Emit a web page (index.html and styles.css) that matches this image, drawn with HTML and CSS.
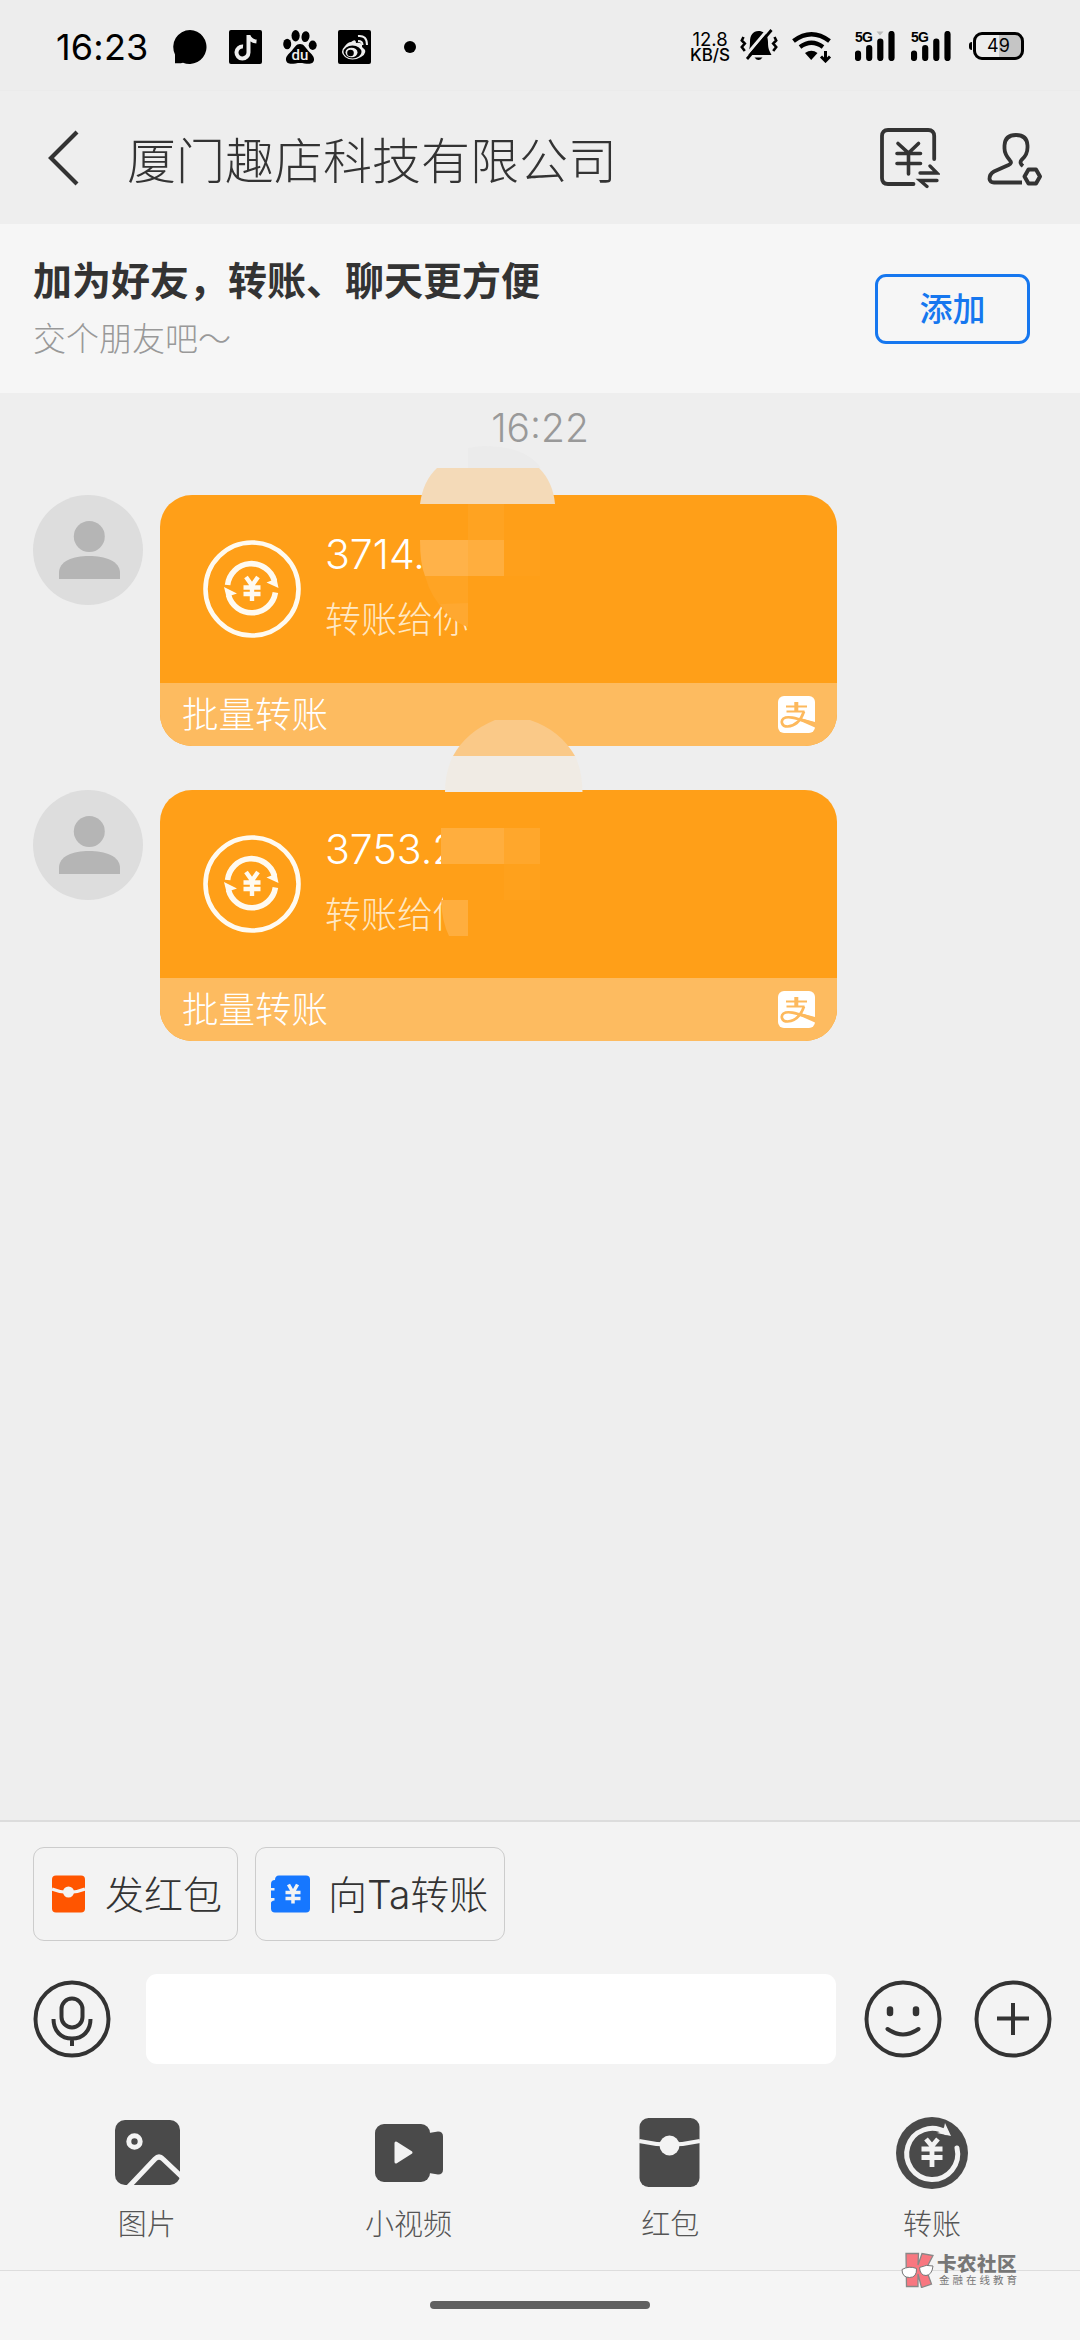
FILE: index.html
```html
<!DOCTYPE html>
<html lang="zh-CN">
<head>
<meta charset="utf-8">
<title>厦门趣店科技有限公司</title>
<link rel="stylesheet" href="styles.css">
</head>
<body>
<svg class="defs" width="0" height="0">
  <symbol id="coin" viewBox="0 0 100 100">
    <circle cx="50" cy="50" r="46.5" fill="none" stroke="#fffaf0" stroke-width="4.6"/>
    <path d="M25.600 46A24 24 0 0 1 72.500 42" fill="none" stroke="#fffaf0" stroke-width="5.6"/>
    <path d="M64.500 43.500l10-4 2 9.500z M35 54.500l-10.500 3.500-2.500-10z" fill="#fffaf0"/>
    <path d="M73.400 53.500A24 24 0 0 1 26.500 56" fill="none" stroke="#fffaf0" stroke-width="5.600"/>
    <path d="M44 38l6 8.500 6-8.500M50 46v16M41.500 48.500h17M41.500 55h17" fill="none" stroke="#fffaf0" stroke-width="4.400"/>
  </symbol>
  <symbol id="alipay" viewBox="0 0 37 37">
    <rect width="37" height="37" rx="6" fill="#fff"/>
    <path d="M8 10.500h21M8.500 15.500h18" fill="none" stroke="#fdb95d" stroke-width="2"/>
    <path d="M16.300 6h4v9h-4z" fill="#fdb95d"/>
    <path d="M26 15.500C23 24 17 30 9.500 30.500 3.500 30.500 2.500 25 5.500 22.500 10 19.500 17 22 37 28" fill="none" stroke="#fdb95d" stroke-width="2.700"/>
    <path d="M22 22L37 26v5.500L20 24z" fill="#fdb95d"/>
  </symbol>
  <symbol id="person" viewBox="0 0 110 110">
    <circle cx="55" cy="55" r="55" fill="#ddd"/>
    <circle cx="56.300" cy="41.500" r="15.500" fill="#b5b5b5"/>
    <path d="M26 84V78C26 66 40 61 56 61S87 66 87 78V84z" fill="#b5b5b5"/>
  </symbol>
  <symbol id="bars" viewBox="0 0 40 30">
    <path d="M3 22.500v4.500M14.200 17v10M25.300 10.500v16.500M36.500 3v24" stroke="#000" stroke-width="6.200" stroke-linecap="round"/>
  </symbol>
</svg>

<div class="phone">
  <div class="status">
    <span class="clock">16:23</span>
    <svg class="s-chat" width="36" height="36" viewBox="0 0 36 36"><path d="M18 1A17 17 0 1 1 11 33.700Q9 34.500 3 34.300V25.500A17 17 0 0 1 18 1z"/></svg>
    <svg class="s-app" width="33" height="34" viewBox="0 0 33 34"><rect width="33" height="34" rx="2"/><path d="M19.500 5v17.500a6 6 0 1 1-5.500-6M19.500 6q2 5 8 5.500" fill="none" stroke="#eee" stroke-width="4"/></svg>
    <svg class="s-app" width="34" height="34" viewBox="0 0 34 34"><ellipse cx="4.200" cy="14" rx="4" ry="5.300"/><ellipse cx="12.600" cy="5.700" rx="4.100" ry="5.700"/><ellipse cx="22.600" cy="6.500" rx="4" ry="5.500" transform="rotate(10 22 6)"/><ellipse cx="29.700" cy="15.300" rx="4" ry="4.700"/><path d="M17 14C21 14 22.500 17.500 25 20.500S31.500 26 31 30C30 36 22.500 33 17 33S4 36 3 30C2.500 26 6.500 23.500 9 20.500S13 14 17 14z"/><text x="17" y="30" class="du">du</text></svg>
    <svg class="s-app" width="33" height="34" viewBox="0 0 33 34"><rect width="33" height="34" rx="2"/><path d="M13 12Q18 8 18 13q7-1 6 4 7 5-1 10-9 5-16 0-6-5 0-11 3-4 6-4z" fill="#eee"/><ellipse cx="14.500" cy="22" rx="9" ry="6.500"/><ellipse cx="13.500" cy="22.500" rx="6" ry="4.800" fill="#eee"/><circle cx="12.500" cy="23" r="3.300"/><path d="M20 6q9-1 9 9M20 11q4.500 0 4.500 4" fill="none" stroke="#eee" stroke-width="2"/></svg>
    <span class="dot"></span>
    <div class="speed"><span>12.8</span><b>KB/S</b></div>
    <svg class="s-bell" width="40" height="36" viewBox="0 0 40 36"><path d="M8 27Q11 22 11 14C11 7 14 3 19.500 3S29 7 29 14 30 22 32.500 27z"/><path d="M15.500 29.500h8q-4 5-8 0z"/><path d="M6 28.500L30.500-.5" stroke="#ededed" stroke-width="3"/><path d="M8 31L32.500 2" stroke="#000" stroke-width="2.800"/><path d="M4.500 9l-1.700 3.500 3 3-3 3.500 3 4M35.500 9l1.700 3.500-3 3 3 3.500-3 4" fill="none" stroke="#000" stroke-width="2.600"/></svg>
    <svg class="s-wifi" width="40" height="32" viewBox="0 0 40 32"><path d="M1.500 10Q19.500-3.500 37.500 10" fill="none" stroke="#000" stroke-width="4.500"/><path d="M8 16Q19.500 7.500 31 16" fill="none" stroke="#000" stroke-width="4.300"/><path d="M13 22q6.500-4.500 12.500 0l-6.300 7z"/><path d="M33.500 20v9M29 25.500l4.500 4.500 4.500-4.500" fill="none" stroke="#000" stroke-width="3"/></svg>
    <div class="cell"><span>5G</span><svg width="40" height="30"><use href="#bars"/><path d="M21.500.5h7l-3.500 4z" fill="#bbb"/></svg></div>
    <div class="cell second"><span>5G</span><svg width="40" height="30"><use href="#bars"/></svg></div>
    <div class="battery"><i></i><span>49</span></div>
  </div>

  <header class="header">
    <svg class="back" width="34" height="56" viewBox="0 0 34 56"><path d="M31 2L5 28 31 54" fill="none" stroke="#333" stroke-width="4.200"/></svg>
    <h1>厦门趣店科技有限公司</h1>
    <svg class="h-yen" width="60" height="62" viewBox="0 0 60 62" fill="none" stroke="#333" stroke-width="3.800" stroke-linecap="round"><path d="M54.200 31V8q0-6-6-6H8Q2 2 2 8v42q0 6 6 6h25.500"/><path d="M18 15.500l10.500 9.500 10-9.500M28.500 25v21M17 25.500h23.500M17 35.500h23.500" stroke-width="3.600"/><path d="M40 45h17l-7-7M57 52.500H40l7 6" stroke-width="3.300"/></svg>
    <svg class="h-user" width="56" height="54" viewBox="0 0 56 54" fill="none" stroke="#333" stroke-width="3.800"><path d="M36 34Q32 31 34.500 28C38 25 40.500 21 40.500 15.500V13.500Q40 3 29 3T17.500 13.500v3C17.500 22 20 25 23 28.500Q25.500 31 21.500 33L7 39.500Q2.500 42 2.500 47 3 50.500 7 50.500H35"/><path d="M41.500 37.500h7.500l4 7-4 7h-7.500l-4-7z" stroke-width="4" stroke-linejoin="round"/></svg>
  </header>

  <section class="friend">
    <div class="friend-text"><h2>加为好友，转账、聊天更方便</h2><p>交个朋友吧～</p></div>
    <button class="add">添加</button>
  </section>

  <main class="chat">
    <time>16:22</time>
    <article class="msg">
      <svg class="avatar" width="110" height="110"><use href="#person"/></svg>
      <div class="card">
        <div class="card-main"><svg width="100" height="100"><use href="#coin"/></svg><div class="card-text"><strong>3714.</strong><span>转账给你</span></div></div>
        <div class="card-foot"><span>批量转账</span><svg width="37" height="37"><use href="#alipay"/></svg></div>
      </div>
    </article>
    <article class="msg">
      <svg class="avatar" width="110" height="110"><use href="#person"/></svg>
      <div class="card">
        <div class="card-main"><svg width="100" height="100"><use href="#coin"/></svg><div class="card-text"><strong>3753.2</strong><span>转账给你</span></div></div>
        <div class="card-foot"><span>批量转账</span><svg width="37" height="37"><use href="#alipay"/></svg></div>
      </div>
    </article>
    <svg class="mosaic" width="180" height="510" viewBox="410 440 180 510">
      <path d="M468 448Q482 445 494 446.500 526 448 541 468H468z" fill="#ebebeb"/>
      <path d="M437 468H539Q553 482 555 504H420Q423 481 437 468z" fill="#f4dab8"/>
      <path d="M468 504h36v36h-36z" fill="#ffa321"/>
      <path d="M420 540h48v36h-43q-5-12-5-36z" fill="#ffb249"/>
      <path d="M468 540h36v36h-36z" fill="#ffae3e"/>
      <path d="M504 540h36v36h-36z" fill="#ffa01b"/>
      <path d="M425 576h43v36h-22q-15-14-21-36z" fill="#ffa424"/>
      <path d="M440 604l28-1v24q-12-4-22-14z" fill="#ffa830"/>
      <path d="M468 590h12v50h-12z" fill="#ff9f18"/>
      <path d="M495 720h35Q560 730 575 756H453Q466 732 495 720z" fill="#fac988"/>
      <path d="M453 756H575Q582 770 582.500 792H445Q445 772 453 756z" fill="#f0ebe4"/>
      <path d="M441 828h63v36h-63z" fill="#ffae3e"/>
      <path d="M504 828h36v36h-36z" fill="#ffa72c"/>
      <path d="M504 864h36v36h-36z" fill="#ffa11c"/>
      <path d="M443 885h40v54h-40z" fill="#ff9f18"/>
      <path d="M441 900h27v36h-19q-7-14-8-36z" fill="#ffae3e"/>
    </svg>
  </main>

  <footer class="composer">
    <div class="chips">
      <div class="chip"><svg width="33" height="38" viewBox="0 0 33 38"><rect y=".5" width="33" height="37" rx="4" fill="#ff5500"/><path d="M0 14Q16.500 21 33 14" fill="none" stroke="#f3f3f3" stroke-width="3"/><circle cx="16.500" cy="17" r="5.500" fill="#f3f3f3"/></svg><span>发红包</span></div>
      <div class="chip two"><svg width="39" height="38" viewBox="0 0 39 38"><path d="M8 .5H35Q39 .5 39 4.500V33.500Q39 37.500 35 37.500H4Q0 37.500 0 33.500V28Q0 26 3.500 25.500V23H0V15.500H3.500V13H0V9Q0 5 4 5 4 .5 8 .5z" fill="#1677ff"/><path d="M17.500 9.500l4.500 8 4.500-8M22 17v11.500M14.500 17.500h15M14.500 23.500h15" fill="none" stroke="#f3f3f3" stroke-width="3.500"/></svg><span>向Ta转账</span></div>
    </div>
    <div class="inputrow">
      <svg width="78" height="78" viewBox="0 0 78 78" fill="none" stroke="#333" stroke-width="4"><circle cx="39" cy="39" r="36.500"/><rect x="28.500" y="18.500" width="21" height="29" rx="10.500"/><path d="M20.500 39C20.500 51 28 58.500 39 58.500S57.500 51 57.500 39M39 58v8"/></svg>
      <div class="field"></div>
      <svg class="smile" width="78" height="78" viewBox="0 0 78 78" fill="none" stroke="#333" stroke-width="4"><circle cx="39" cy="39" r="36.500"/><path d="M26 29.500v3.500M52 29.500v3.500" stroke-width="6.500" stroke-linecap="round"/><path d="M23.500 49Q39 60 54.500 49" stroke-linecap="round"/></svg>
      <svg class="plus" width="78" height="78" viewBox="0 0 78 78" fill="none" stroke="#333" stroke-width="4"><circle cx="39" cy="39" r="36.500"/><path d="M23 38.500h32M39 23v32"/></svg>
    </div>
    <div class="tools">
      <div class="tool"><svg width="76" height="76" viewBox="0 0 76 76"><rect x="6" y="5" width="65" height="65" rx="10" fill="#4a4a4a"/><circle cx="25.500" cy="26.500" r="5.700" fill="none" stroke="#f3f3f3" stroke-width="5"/><path d="M19.500 72L46 44Q50 40 54 44L73 62" fill="none" stroke="#f3f3f3" stroke-width="5"/></svg><span>图片</span></div>
      <div class="tool"><svg width="76" height="76" viewBox="0 0 76 76"><rect x="4" y="9" width="55" height="58" rx="9" fill="#4a4a4a"/><path d="M58 18l9-1.500q5 0 5 5v33q0 5-5 5l-9-1.500z" fill="#4a4a4a"/><path d="M25 28v19l15-9.500z" fill="#f3f3f3" stroke="#f3f3f3" stroke-width="3" stroke-linejoin="round"/></svg><span>小视频</span></div>
      <div class="tool"><svg width="76" height="76" viewBox="0 0 76 76"><rect x="7.500" y="3" width="60" height="69" rx="9" fill="#4a4a4a"/><path d="M7 26Q37.500 33 68 26" fill="none" stroke="#f3f3f3" stroke-width="4.200"/><circle cx="37.500" cy="30.500" r="10" fill="#f3f3f3"/></svg><span>红包</span></div>
      <div class="tool"><svg width="76" height="76" viewBox="0 0 76 76"><circle cx="38" cy="38" r="36" fill="#4a4a4a"/><path d="M52 17.500A25.500 25.500 0 1 0 63 33" fill="none" stroke="#f3f3f3" stroke-width="5" stroke-linecap="round"/><path d="M51 8l6 13-14-3q7-1 8-10z" fill="#f3f3f3"/><path d="M32 24l6 7 6-7M38 31v21M27.500 34h21M27.500 42.500h21" fill="none" stroke="#f3f3f3" stroke-width="4.800"/></svg><span>转账</span></div>
    </div>
    <div class="watermark">
      <svg width="36" height="36" viewBox="0 0 36 36"><path d="M6 1.500h12.500L18 13 22 1.500l11 2L26 17l5.500 15-10 3.500L18 22v12.500H6.500z" fill="#f87780" stroke="#888" stroke-width="1.300"/><path d="M2 17.500q7-4 14.500-1 .5 9-7 9T2 17.500zM19.500 15.500q7-3.500 13.500-1.500-1 9-7 9.500-6 0-6.500-8z" fill="#fff" stroke="#777" stroke-width="1"/></svg>
      <div><b>卡农社区</b><small>金融在线教育</small></div>
    </div>
  </footer>
  <div class="nav"><i></i></div>
</div>
</body>
</html>
```
FILE: styles.css
```css
* { box-sizing: border-box; margin: 0; padding: 0; }
body { width: 1080px; background: #eee; font-family: Inter, "Noto Sans CJK SC", sans-serif; color: #333; }
svg { display: block; flex: none; }
.defs { position: absolute; }
.phone { width: 1080px; height: 2340px; display: flex; flex-direction: column; overflow: hidden; }

.status { height: 90px; padding: 0 55px 0 56px; display: flex; align-items: center; background: #ededed; color: #000; }
.status > * { flex: none; }
.clock { width: 94px; font-size: 36px; line-height: 90px; padding-top: 4px; letter-spacing: 0.2px; white-space: nowrap; }
.s-chat { margin-left: 22px; margin-top: 3px; }
.s-app { margin-left: 21px; margin-top: 3px; }
.s-chat + .s-app { margin-left: 21px; }
.du { font: 500 15px Roboto, sans-serif; fill: #eee; text-anchor: middle; }
.dot { width: 12px; height: 12px; border-radius: 50%; background: #000; margin: 3px 0 0 33px; }
.speed { width: 42px; margin-left: 273px; margin-top: 3px; display: flex; flex-direction: column; align-items: center; font-size: 18.500px; line-height: 16px; white-space: nowrap; }
.speed b { font-size: 17px; font-weight: 500; }
.s-bell { margin-left: 8px; margin-top: 2px; }
.s-wifi { margin-left: 13px; margin-top: 3px; }
.cell { position: relative; width: 40px; height: 30px; margin-left: 23px; margin-top: 2px; }
.cell.second { margin-left: 16px; }
.cell span { position: absolute; left: 0; top: -1px; font: 700 14px/14px "Liberation Sans", sans-serif; letter-spacing: -0.8px; }
.battery { position: relative; width: 51px; height: 28px; margin: 2px 0 0 22px; border: 3px solid #000; border-radius: 9px; background: linear-gradient(90deg, transparent 52%, #c5c5c5 52%); font-size: 18px; line-height: 22px; text-align: center; }
.battery i { position: absolute; left: -7px; top: 7px; width: 3px; height: 8px; border-radius: 3px 0 0 3px; background: #000; }

.header { height: 134px; padding: 0 37px 0 46px; display: flex; align-items: center; background: #eee; border-top: 1px solid #ebebeb; }
.header h1 { margin-left: 47px; padding-top: 8px; font-size: 49px; font-weight: 300; line-height: 70px; white-space: nowrap; }
.h-yen { margin-left: auto; margin-top: 3px; }
.h-user { margin-left: 47px; margin-top: 3px; }

.friend { height: 169px; padding: 0 50px 0 33px; display: flex; align-items: center; justify-content: space-between; background: #f6f6f6; }
.friend-text { padding-top: 3px; }
.friend h2 { font-size: 39px; font-weight: 700; line-height: 58px; }
.friend p { font-size: 33px; font-weight: 300; line-height: 58px; color: #999; }
.add { width: 155px; height: 70px; border: 3px solid #1677ef; border-radius: 11px; background: #f6f6f6; color: #1677ef; font: 500 33px/60px "Noto Sans CJK SC", sans-serif; padding-bottom: 3px; }

.chat { position: relative; height: 1427px; padding: 0 33px; display: flex; flex-direction: column; }
.chat time { height: 102px; line-height: 70px; text-align: center; font-size: 39px; font-weight: 300; color: #999; }
.msg { display: flex; gap: 17px; margin-bottom: 44px; }
.card { width: 677px; height: 251px; border-radius: 32px; overflow: hidden; background: #ff9f18; color: #fff; }
.card-main { height: 188px; padding: 44px 0 0 42px; display: flex; }
.card-text { display: flex; flex-direction: column; margin: -16px 0 0 23px; }
.card-text strong { font-size: 41px; font-weight: 300; line-height: 62px; }
.card-text span { font-size: 36px; font-weight: 300; line-height: 66px; padding-top: 2px; color: #ffe8c4; }
.card-foot { height: 63px; padding: 0 22px; display: flex; align-items: center; justify-content: space-between; background: #fdbb60; font-size: 36.500px; font-weight: 300; line-height: 63px; }
.card-foot span { padding-top: 2px; }
.mosaic { position: absolute; left: 410px; top: 47px; }

.composer { position: relative; height: 450px; border-top: 2px solid #dcdcdc; background: #f3f3f3; padding: 25px 28px 0 33px; }
.chips { display: flex; gap: 17px; }
.chip { width: 205px; height: 94px; border: 1px solid #ccc; border-radius: 11px; display: flex; align-items: center; padding-left: 18px; font-size: 39px; font-weight: 300; white-space: nowrap; }
.chip span { margin-left: 20px; padding-bottom: 4px; }
.chip.two { width: 250px; padding-left: 15px; }
.chip.two span { margin-left: 18px; }
.inputrow { display: flex; align-items: center; margin-top: 33px; height: 90px; }
.field { width: 691px; height: 90px; margin-left: 35px; border-radius: 11px; background: #fff; }
.smile { margin-left: 28px; }
.plus { margin-left: 32px; }
.tools { display: grid; grid-template-columns: repeat(4, 261.700px); margin: 51px 0 0 -17px; }
.tool { display: flex; flex-direction: column; align-items: center; font-size: 29px; font-weight: 300; line-height: 44px; color: #555; }
.tool span { margin-top: 12px; }
.watermark { position: absolute; left: 900px; top: 430px; display: flex; gap: 1px; color: #777; z-index: 2; }
.watermark div { display: flex; flex-direction: column; white-space: nowrap; padding-top: 2px; }
.watermark b { font-size: 19.500px; font-weight: 900; line-height: 21px; letter-spacing: 0.5px; }
.watermark small { font-size: 10.500px; line-height: 12px; letter-spacing: 3px; margin-left: 2px; }
.nav { height: 70px; border-top: 1px solid #ddd; background: #f5f5f5; padding-top: 30px; }
.nav i { display: block; width: 220px; height: 8px; border-radius: 4px; margin: 0 auto; background: #606060; }
```
